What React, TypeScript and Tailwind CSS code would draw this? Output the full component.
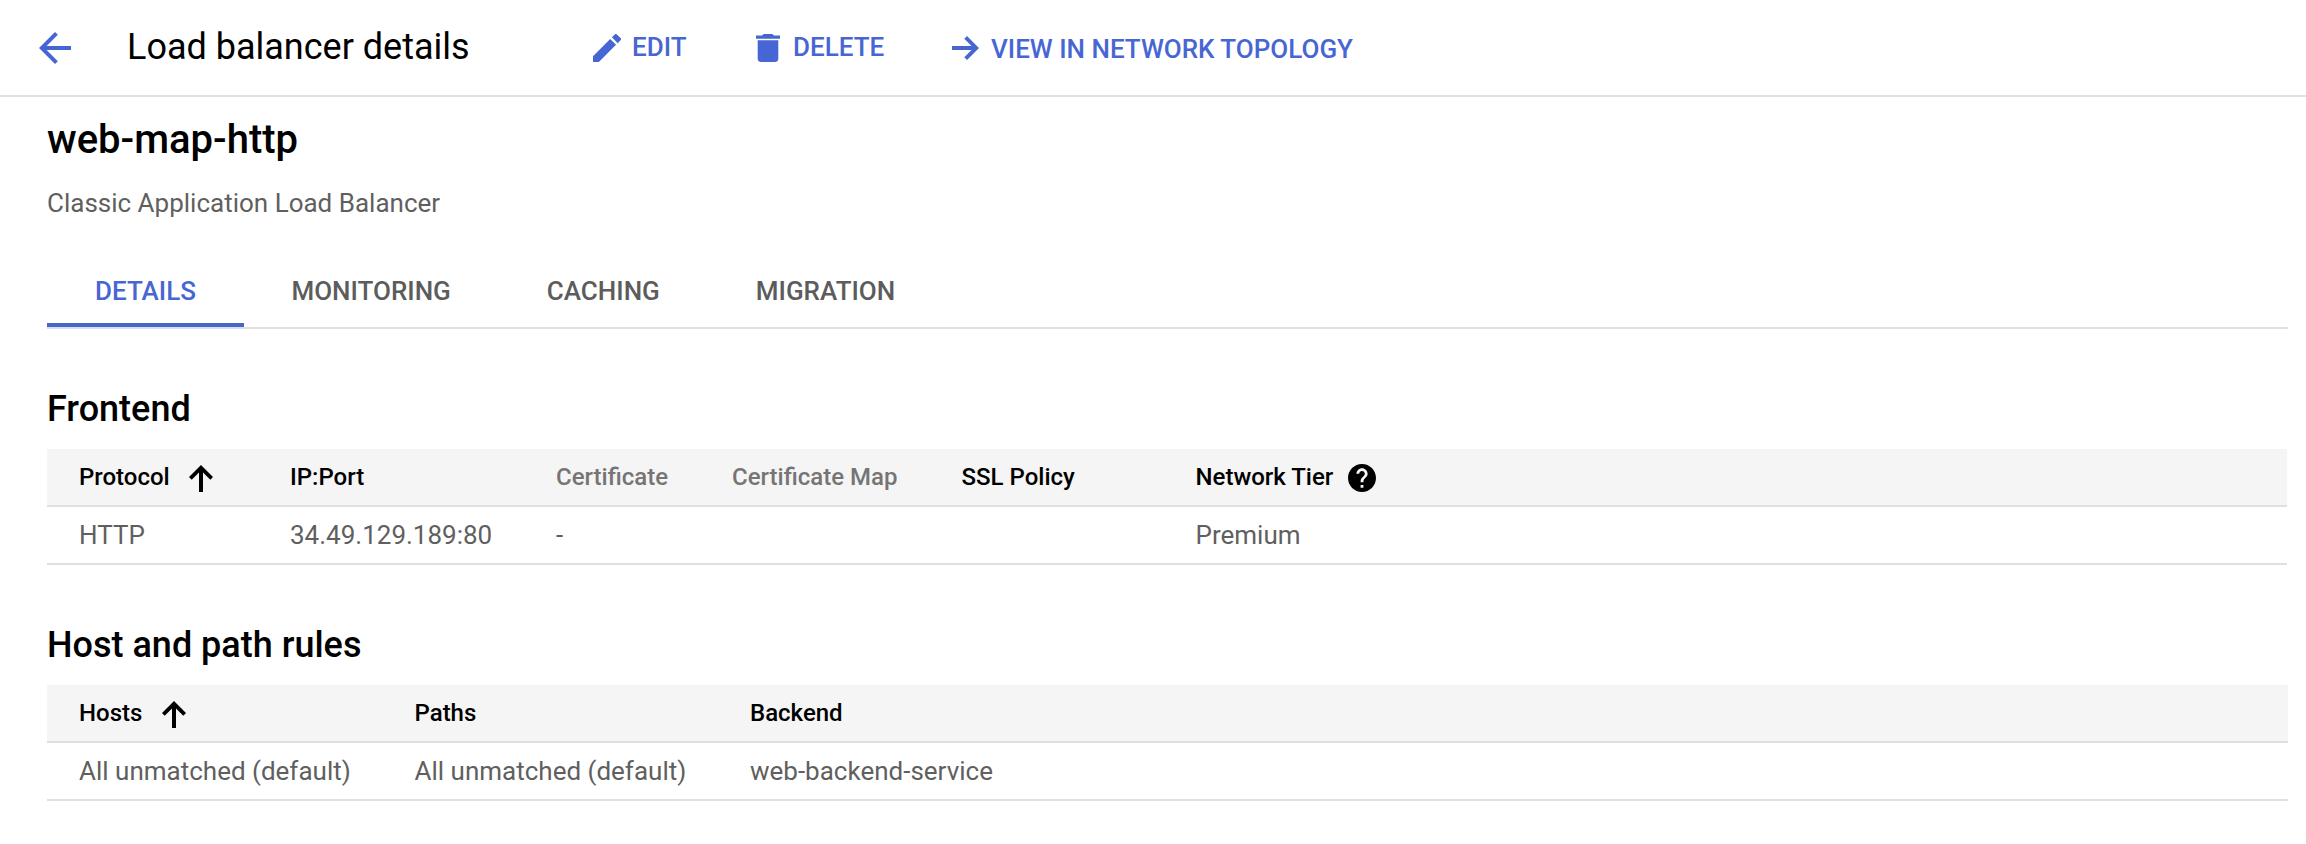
import React from "react";

const ARROW_BACK = "M20 11H7.83l5.59-5.59L12 4l-8 8 8 8 1.41-1.41L7.83 13H20v-2z";
const ARROW_FORWARD = "M15 0l-2.700 2.700 7.200 7.300H0v4h19.500l-7.200 7.300L15 24l12-12z";
const ARROW_UP = "M12 0L0 12l2.700 2.700L10 7.400V27h4V7.400l7.300 7.300L24 12z";
const PENCIL = "M3 17.25V21h3.75L17.81 9.94l-3.75-3.75L3 17.25zM20.71 7.04a1 1 0 0 0 0-1.41l-2.34-2.34a1 1 0 0 0-1.41 0l-1.83 1.83 3.75 3.75 1.83-1.83z";
const TRASH = "M6 19c0 1.1.9 2 2 2h8c1.1 0 2-.9 2-2V7H6v12zM19 4h-3.500l-1-1h-5l-1 1H5v2h14V4z";
const HELP = "M12 2C6.48 2 2 6.48 2 12s4.480 10 10 10 10-4.480 10-10S17.520 2 12 2zm1 17h-2v-2h2v2zm2.070-7.750l-.9.920C13.450 12.900 13 13.500 13 15h-2v-.5c0-1.100.450-2.100 1.170-2.830l1.240-1.260c.370-.360.590-.860.590-1.410 0-1.100-.9-2-2-2s-2 .9-2 2H8c0-2.210 1.790-4 4-4s4 1.790 4 4c0 .880-.360 1.680-.930 2.250z";

function Icon({ d, className, viewBox }: { d: string; className: string; viewBox: string }) {
  return (
    <svg viewBox={viewBox} preserveAspectRatio="none" className={`shrink-0 fill-current ${className}`} aria-hidden="true">
      <path d={d} />
    </svg>
  );
}

function SortArrow() {
  return <Icon d={ARROW_UP} viewBox="0 0 24 27" className="mt-[3px] ml-[19.5px] h-[27px] w-6" />;
}

function Tab({ label, className = "px-12 text-[#5c5c5c]" }: { label: string; className?: string }) {
  return <button className={`h-[72px] ${className}`}>{label}</button>;
}

export default function App() {
  return (
    <div className="h-[844px] w-[2306px] overflow-hidden bg-white font-[Roboto,sans-serif] text-black">
      <header className="flex h-[97px] items-center border-b-2 border-[#e0e0e0] font-medium text-[26px] text-[#4766d3]">
        <Icon d={ARROW_BACK} viewBox="4 4 16 16" className="ml-[39px] h-8 w-8" />
        <h1 className="mb-px ml-14 w-[466px] text-[36px] font-normal text-black leading-[42px]">Load balancer details</h1>
        <button className="flex w-[163px] items-center">
          <Icon d={PENCIL} viewBox="3 3 18 18" className="h-7 w-7" />
          <span className="ml-[11px]">EDIT</span>
        </button>
        <button className="flex w-[196px] items-center">
          <Icon d={TRASH} viewBox="5 3 14 18" className="h-7 w-6" />
          <span className="ml-[13px]">DELETE</span>
        </button>
        <button className="flex items-center">
          <Icon d={ARROW_FORWARD} viewBox="0 0 27 24" className="h-6 w-[27px]" />
          <span className="ml-3 pt-[3px]">VIEW IN NETWORK TOPOLOGY</span>
        </button>
      </header>

      <main className="pl-[47px] pr-[18px]">
        <h2 className="pt-5 text-[40px] font-medium leading-[46px]">web-map-http</h2>
        <p className="mt-[25px] text-[26px] leading-[30px] text-[#5f5f5f]">Classic Application Load Balancer</p>

        <nav className="mt-[37px] flex h-[74px] border-b-2 border-[#e0e0e0] text-[26px] font-medium">
          <Tab
            label="DETAILS"
            className="border-b-4 border-[#4965c6] px-12 pt-1 text-[#4766d3] shadow-[0_2px_0_#d5dff6]"
          />
          <Tab label="MONITORING" className="-ml-[0.5px] px-12 text-[#5c5c5c]" />
          <Tab label="CACHING" />
          <Tab label="MIGRATION" />
        </nav>

        <h3 className="mt-[58px] text-[36px] font-medium leading-[44px]">Frontend</h3>
        <div className="mr-px mt-[18px]">
          <div className="grid h-[58px] grid-cols-[211px_266px_176px_229.5px_234px_1fr] items-center border-b-2 border-[#e0e0e0] bg-[#f5f5f5] pl-8 text-[24px] font-medium">
            <div className="flex items-center">
              Protocol
              <SortArrow />
            </div>
            <div>IP:Port</div>
            <div className="text-[#757575]">Certificate</div>
            <div className="text-[#757575]">Certificate Map</div>
            <div>SSL Policy</div>
            <div className="flex items-center">
              Network Tier
              <Icon d={HELP} viewBox="2 2 20 20" className="mt-0.5 ml-[15px] h-7 w-7" />
            </div>
          </div>
          <div className="grid h-[58px] grid-cols-[211px_266px_176px_229.5px_234px_1fr] items-center border-b-2 border-[#e0e0e0] pl-8 text-[26px] text-[#5f5f5f]">
            <div>HTTP</div>
            <div>34.49.129.189:80</div>
            <div>-</div>
            <div />
            <div />
            <div>Premium</div>
          </div>
        </div>

        <h3 className="mt-[58px] text-[36px] font-medium leading-[44px]">Host and path rules</h3>
        <div className="mt-[18px]">
          <div className="grid h-[58px] grid-cols-[335.5px_335.5px_1fr] items-center border-b-2 border-[#e0e0e0] bg-[#f5f5f5] pl-8 text-[24px] font-medium">
            <div className="flex items-center">
              Hosts
              <SortArrow />
            </div>
            <div>Paths</div>
            <div>Backend</div>
          </div>
          <div className="grid h-[58px] grid-cols-[335.5px_335.5px_1fr] items-center border-b-2 border-[#e0e0e0] pl-8 text-[26px] text-[#5f5f5f]">
            <div>All unmatched (default)</div>
            <div>All unmatched (default)</div>
            <div>web-backend-service</div>
          </div>
        </div>
      </main>
    </div>
  );
}
